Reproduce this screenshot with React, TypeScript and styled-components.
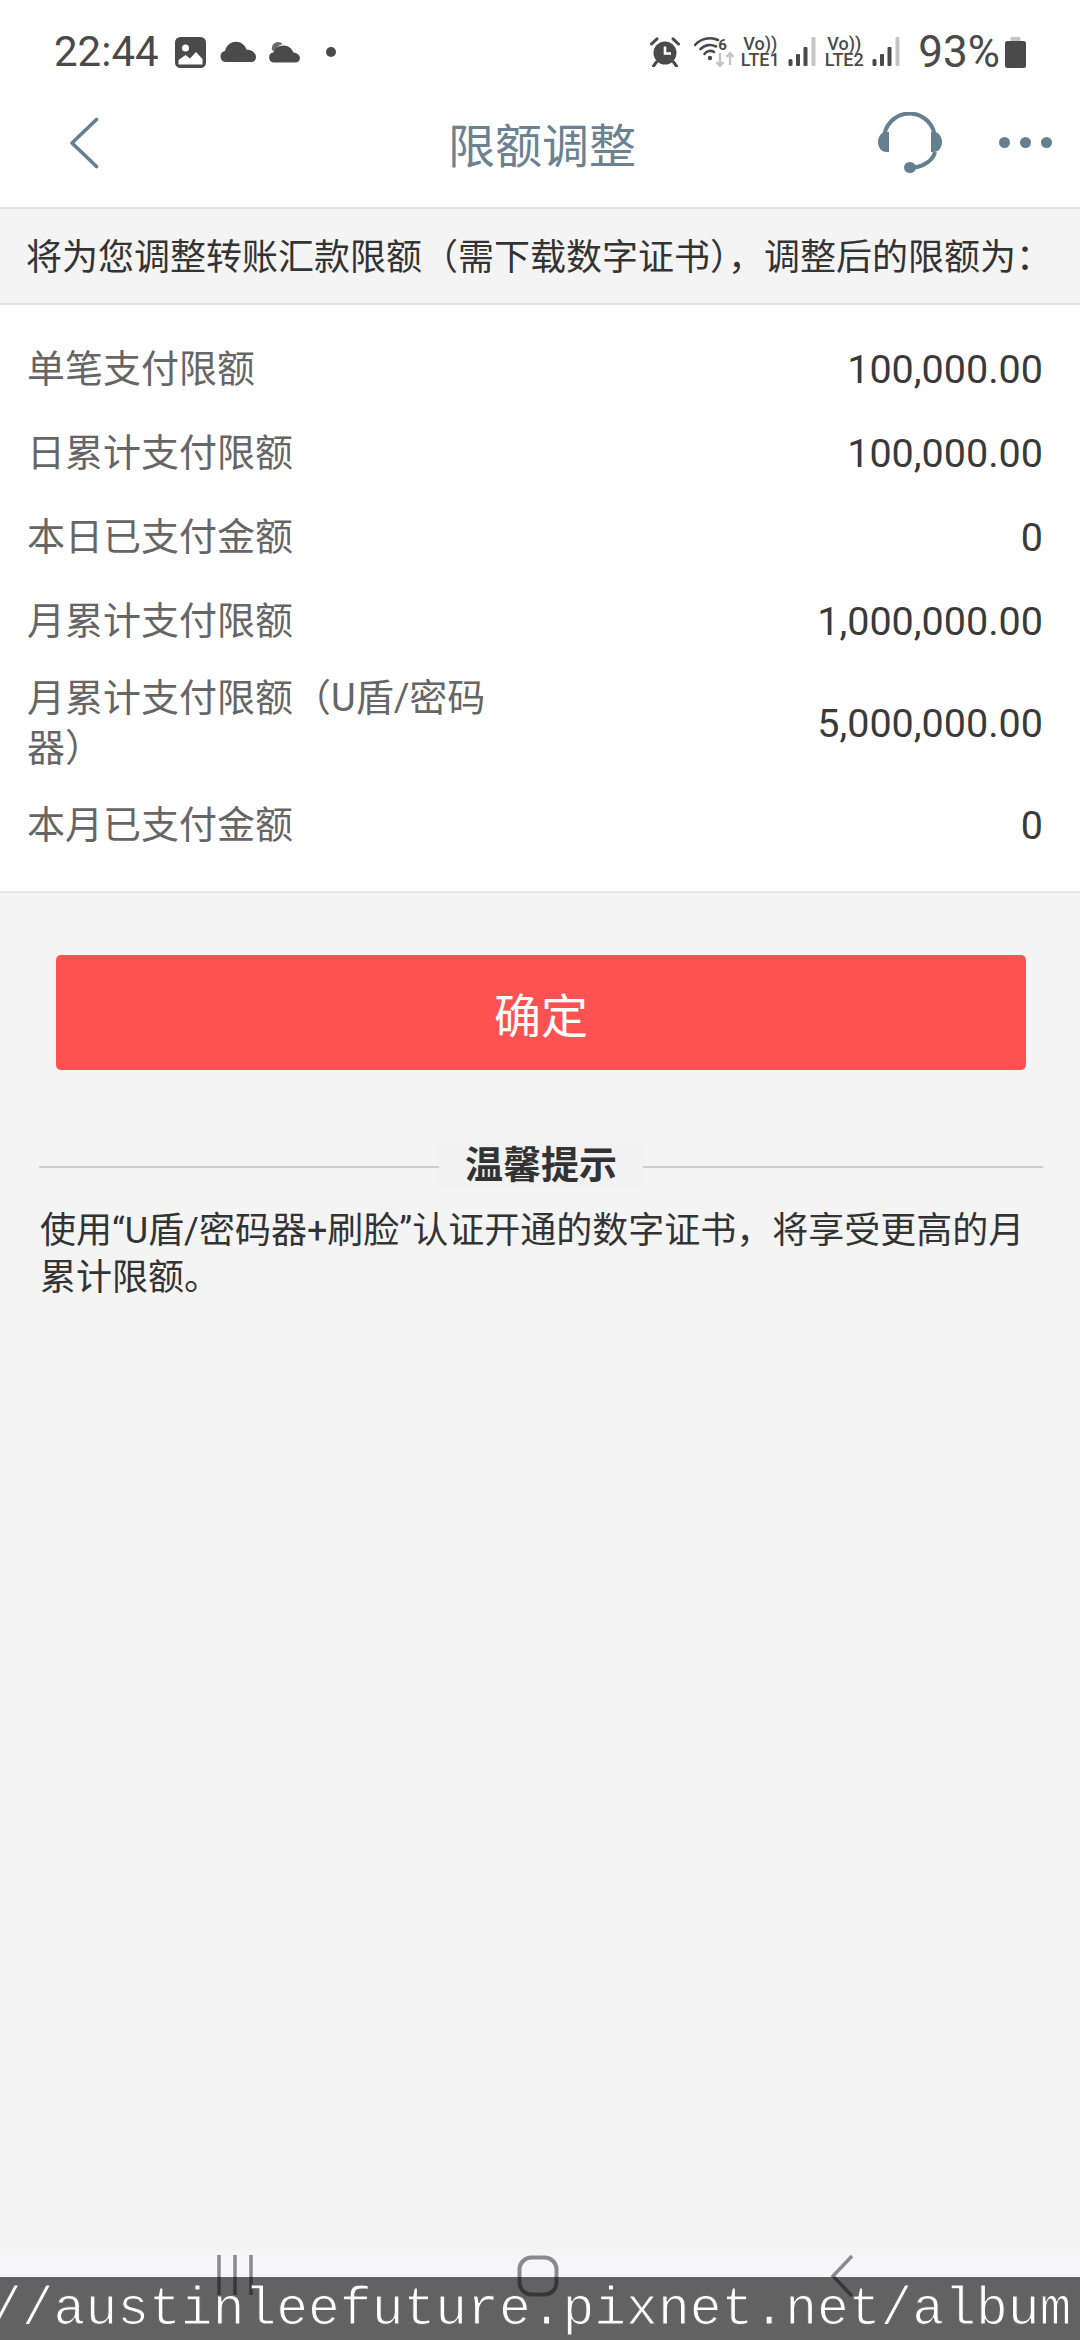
import React from "react";
import styled, { createGlobalStyle } from "styled-components";

const rows = [
  { label: "单笔支付限额", value: "100,000.00" },
  { label: "日累计支付限额", value: "100,000.00" },
  { label: "本日已支付金额", value: "0" },
  { label: "月累计支付限额", value: "1,000,000.00" },
  { label: "月累计支付限额（U盾/密码器）", value: "5,000,000.00" },
  { label: "本月已支付金额", value: "0" },
];

const SignalIcon: React.FC = () => (
  <svg width="28" height="30" viewBox="0 0 28 30">
    <rect x="0.500" y="22" width="4" height="7" rx="1.500" fill="#4a4a4a" />
    <rect x="8" y="17" width="4" height="12" rx="1" fill="#4a4a4a" />
    <rect x="15.500" y="10" width="4" height="19" rx="1" fill="#4a4a4a" />
    <rect x="23.500" y="0" width="4" height="29" rx="1" fill="#c4c4c4" />
  </svg>
);

const App: React.FC = () => {
  return (
    <Page>
      <GlobalStyle />
      <StatusBar>
        <StatusGroup>
          <Clock>22:44</Clock>
          <Slot $left={17}>
            <svg width="31" height="31" viewBox="0 0 31 31">
              <rect x="1.500" y="1.500" width="28" height="28" rx="4" fill="#4a4a4a" stroke="#4a4a4a" strokeWidth="3" />
              <circle cx="10.500" cy="11" r="3.600" fill="#fff" />
              <path d="M3.500 27.500v-4.500l7-5 4.500 3.500 6-6.500 6.500 7v5.500z" fill="#fff" />
            </svg>
          </Slot>
          <Slot $left={14}>
            <svg width="36" height="22" viewBox="0 0 36 22">
              <path d="M6 21a5.500 5.500 0 0 1-1-10.900C6 5 10.500 .8 16 .8c5 0 9 3.200 10.400 7.700C31.800 8.600 36 12 36 16c0 3-2 5-5 5z" fill="#4a4a4a" />
            </svg>
          </Slot>
          <Slot $left={13}>
            <svg width="31" height="22" viewBox="0 0 31 22">
              <path d="M3 9.500C2 5 5 1 9 1c2 0 3.500.8 4.700 2-3.700 1-6.300 3.500-7 6.500z" fill="#6a6a6a" />
              <path d="M5 21.500a5 5 0 0 1-.8-9.900C5.500 7.500 9.500 4.500 14.500 4.500c5 0 8.500 3 9.800 7 3.700.3 6.700 2.800 6.700 5.500 0 2.700-2 4.500-4.500 4.500z" fill="#4a4a4a" />
            </svg>
          </Slot>
          <NotificationDot />
        </StatusGroup>
        <StatusGroup>
          <svg width="30" height="30" viewBox="0 0 30 30">
            <circle cx="15" cy="16" r="11.500" fill="#4a4a4a" />
            <path d="M15 9.500v7h6" fill="none" stroke="#fff" strokeWidth="2.600" />
            <path d="M1.500 7 7 1.800M28.500 7 23 1.800M6.500 25l-3 4M23.500 25l3 4" stroke="#4a4a4a" strokeWidth="3" strokeLinecap="round" />
          </svg>
          <WifiBox>
            <svg width="40" height="30" viewBox="0 0 40 30">
              <path d="M1 8A20 20 0 0 1 24 3M6.500 12A13 13 0 0 1 22 9.500M10.500 17A7 7 0 0 1 20 15" fill="none" stroke="#4a4a4a" strokeWidth="2.600" strokeLinecap="round" />
              <circle cx="16" cy="21" r="2.200" fill="#4a4a4a" />
              <path d="M26 16v13M22.500 25l3.500 4 3.500-4M36 28V16M32.500 20l3.500-4 3.500 4" fill="none" stroke="#c4c4c4" strokeWidth="2.400" />
            </svg>
            <WifiBand>6</WifiBand>
          </WifiBox>
          <Slot $left={6}>
            <Carrier>
              <span>Vo))</span>
              <span>LTE1</span>
            </Carrier>
          </Slot>
          <Slot $left={8}>
            <SignalIcon />
          </Slot>
          <Slot $left={8}>
            <Carrier>
              <span>Vo))</span>
              <span>LTE2</span>
            </Carrier>
          </Slot>
          <Slot $left={8}>
            <SignalIcon />
          </Slot>
          <Battery>93%</Battery>
          <Slot $left={5}>
            <svg width="21" height="31" viewBox="0 0 21 31">
              <rect x="5.500" y="0" width="10" height="5" rx="1" fill="#c4c4c4" />
              <rect x="0" y="4" width="21" height="27" rx="2.500" fill="#4a4a4a" />
            </svg>
          </Slot>
        </StatusGroup>
      </StatusBar>

      <Header>
        <HeaderSide>
          <svg width="30" height="52" viewBox="0 0 30 52">
            <path d="M27.500 2.500 3 26l24.500 23.500" fill="none" stroke="#64808f" strokeWidth="3.600" strokeLinecap="round" strokeLinejoin="round" />
          </svg>
        </HeaderSide>
        <Title>限额调整</Title>
        <HeaderActions>
          <svg width="64" height="62" viewBox="0 0 64 62">
            <path d="M6 27a25.500 25.500 0 0 1 51 0M57 40C55 48 47 54 36 55.500" fill="none" stroke="#64808f" strokeWidth="4" />
            <path d="M11 20H8.500C3 20 0 25 0 30s3 10 8.500 10H11z" fill="#64808f" />
            <path d="M53 20h2.500C61 20 64 25 64 30s-3 10-8.500 10H53z" fill="#64808f" />
            <ellipse cx="32" cy="55.500" rx="6" ry="5.500" fill="#64808f" />
          </svg>
          <MoreDots>
            <i />
            <i />
            <i />
          </MoreDots>
        </HeaderActions>
      </Header>

      <Notice>将为您调整转账汇款限额（需下载数字证书），调整后的限额为：</Notice>

      <LimitList>
        {rows.map((row) => (
          <LimitRow key={row.label}>
            <LimitLabel>{row.label}</LimitLabel>
            <LimitValue>{row.value}</LimitValue>
          </LimitRow>
        ))}
      </LimitList>

      <ConfirmButton type="button">确定</ConfirmButton>

      <TipHeading>
        <TipLine />
        <TipTitle>温馨提示</TipTitle>
        <TipLine />
      </TipHeading>
      <TipText>使用“U盾/密码器+刷脸”认证开通的数字证书，将享受更高的月累计限额。</TipText>

      <NavBar>
        <svg width="36" height="40" viewBox="0 0 36 40">
          <path d="M2 0v40M18 0v40M34 0v40" stroke="#8a8a8a" strokeWidth="3.500" />
        </svg>
        <Slot $left={264}>
          <svg width="42" height="42" viewBox="0 0 42 42">
            <rect x="2.500" y="2.500" width="37" height="37" rx="12" fill="none" stroke="#8a8a8a" strokeWidth="4" />
          </svg>
        </Slot>
        <Slot $left={271}>
          <svg width="24" height="42" viewBox="0 0 24 42">
            <path d="M22 1 3 21l19 20" fill="none" stroke="#8a8a8a" strokeWidth="3.500" />
          </svg>
        </Slot>
      </NavBar>

      <Watermark>//austinleefuture.pixnet.net/album</Watermark>
    </Page>
  );
};

export default App;

const GlobalStyle = createGlobalStyle`
  html, body {
    margin: 0;
    padding: 0;
    background: #f4f4f5;
  }
  * {
    box-sizing: border-box;
  }
`;

const Page = styled.div`
  width: 1080px;
  height: 2340px;
  position: relative;
  overflow: hidden;
  display: flex;
  flex-direction: column;
  background: #f4f4f5;
  font-family: Roboto, "Noto Sans CJK SC", sans-serif;
`;

const StatusBar = styled.div`
  height: 90px;
  padding: 36px 54px 0 54px;
  display: flex;
  justify-content: space-between;
  align-items: flex-start;
  background: #fff;
`;

const StatusGroup = styled.div`
  display: flex;
  align-items: center;
  height: 32px;
`;

const Slot = styled.span<{ $left: number }>`
  display: flex;
  flex-shrink: 0;
  margin-left: ${(props) => props.$left}px;
`;

const Clock = styled.span`
  width: 104px;
  font-size: 42px;
  line-height: 32px;
  color: #4a4a4a;
`;

const NotificationDot = styled.span`
  width: 10px;
  height: 10px;
  margin-left: 26px;
  border-radius: 50%;
  background: #4a4a4a;
`;

const WifiBox = styled.div`
  position: relative;
  width: 40px;
  height: 30px;
  margin-left: 14px;
`;

const WifiBand = styled.span`
  position: absolute;
  top: 1px;
  left: 24px;
  font-size: 15px;
  line-height: 14px;
  font-weight: 700;
  color: #4a4a4a;
`;

const Carrier = styled.div`
  width: 40px;
  display: flex;
  flex-direction: column;
  align-items: center;
  font-size: 18px;
  line-height: 16px;
  font-weight: 500;
  color: #4a4a4a;
`;

const Battery = styled.span`
  margin-left: 18px;
  font-size: 44px;
  line-height: 32px;
  color: #4a4a4a;
`;

const Header = styled.div`
  height: 117px;
  padding: 0 28px 12px 32px;
  display: grid;
  grid-template-columns: 1fr auto 1fr;
  align-items: center;
  background: #fff;
`;

const HeaderSide = styled.div`
  padding-left: 37px;
  display: flex;
  align-items: center;
`;

const Title = styled.div`
  font-size: 47px;
  color: #6a8291;
`;

const HeaderActions = styled.div`
  display: flex;
  justify-content: flex-end;
  align-items: center;
  gap: 57px;
`;

const MoreDots = styled.div`
  display: flex;
  gap: 10px;

  i {
    width: 11px;
    height: 11px;
    border-radius: 50%;
    background: #64808f;
  }
`;

const Notice = styled.div`
  height: 98px;
  padding: 0 0 4px 26px;
  display: flex;
  align-items: center;
  border-top: 2px solid #e4e4e4;
  border-bottom: 2px solid #e4e4e4;
  font-size: 36px;
  color: #333;
  background: #f4f4f5;
  white-space: nowrap;
`;

const LimitList = styled.div`
  padding: 22px 37px 24px 27px;
  background: #fff;
  border-bottom: 2px solid #e4e4e4;
`;

const LimitRow = styled.div`
  min-height: 84px;
  padding: 10px 0;
  display: flex;
  justify-content: space-between;
  align-items: center;
`;

const LimitLabel = styled.div`
  width: 466px;
  font-size: 38px;
  line-height: 50px;
  color: #666;
`;

const LimitValue = styled.div`
  font-size: 39.5px;
  color: #3a3a3a;
`;

const ConfirmButton = styled.button`
  width: 970px;
  height: 115px;
  margin: 62px 0 0 56px;
  flex-shrink: 0;
  border: none;
  border-radius: 5px;
  background: #fe5252;
  color: #fff;
  font-family: inherit;
  font-size: 47px;
`;

const TipHeading = styled.div`
  margin: 72px 37px 0 39px;
  height: 46px;
  display: flex;
  align-items: center;
`;

const TipLine = styled.div`
  flex: 1;
  height: 2px;
  margin-top: 4px;
  background: #cccccc;
`;

const TipTitle = styled.div`
  width: 204px;
  height: 46px;
  line-height: 46px;
  text-align: center;
  font-size: 38px;
  font-weight: 700;
  color: #333;
  background: #f2f2f2;
`;

const TipText = styled.div`
  margin: 20px 36px 0 40px;
  font-size: 36px;
  line-height: 47px;
  color: #333;
`;

const NavBar = styled.div`
  margin-top: auto;
  height: 85px;
  padding-left: 217px;
  display: flex;
  align-items: flex-start;
  background: #f6f6f8;
`;

const Watermark = styled.div`
  position: absolute;
  left: -10px;
  right: 0;
  bottom: 0;
  height: 63px;
  background: rgba(0, 0, 0, 0.6);
  color: #fff;
  font-family: "Liberation Mono", monospace;
  font-size: 53px;
  line-height: 66px;
  white-space: nowrap;
  -webkit-text-stroke: 1.1px #636363;
`;
